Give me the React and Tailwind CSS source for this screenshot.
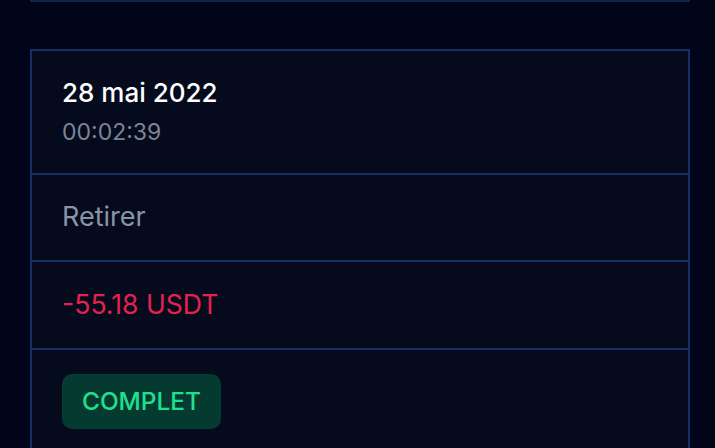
export default function App() {
  return (
    <div className="min-h-screen bg-[#02041a] font-['Inter',sans-serif]">
      {/* bottom edge of previous card */}
      <div className="ml-[30px] w-[660px] h-[2px] bg-[#0f2550]" />
      <div className="h-[47px]" />

      <div className="ml-[30px] w-[660px] border-2 border-[#123064] bg-[#050b1c]">
        <div className="pl-[30px] pt-[26px] pb-[27px] border-b-2 border-[#123064]">
          <div className="text-[26px] leading-[32px] font-medium text-white">28 mai 2022</div>
          <div className="mt-[9px] text-[23px] leading-[28px] text-[#7c8597]">00:02:39</div>
        </div>

        <div className="pl-[30px] pt-[25px] pb-[26px] border-b-2 border-[#123064]">
          <div className="text-[27px] leading-[34px] text-[#8b94a7]">Retirer</div>
        </div>

        <div className="pl-[30px] pt-[25px] pb-[27px] border-b-2 border-[#123064]">
          <div className="text-[26.6px] leading-[34px] text-[#e3224f]">-55.18 USDT</div>
        </div>

        <div className="pl-[30px] pt-[24px] pb-[24px]">
          <span className="inline-flex items-center h-[55px] px-5 rounded-[10px] bg-[#053a30] text-[24.4px] font-medium text-[#1fe08f]">
            COMPLET
          </span>
        </div>
      </div>
    </div>
  );
}
